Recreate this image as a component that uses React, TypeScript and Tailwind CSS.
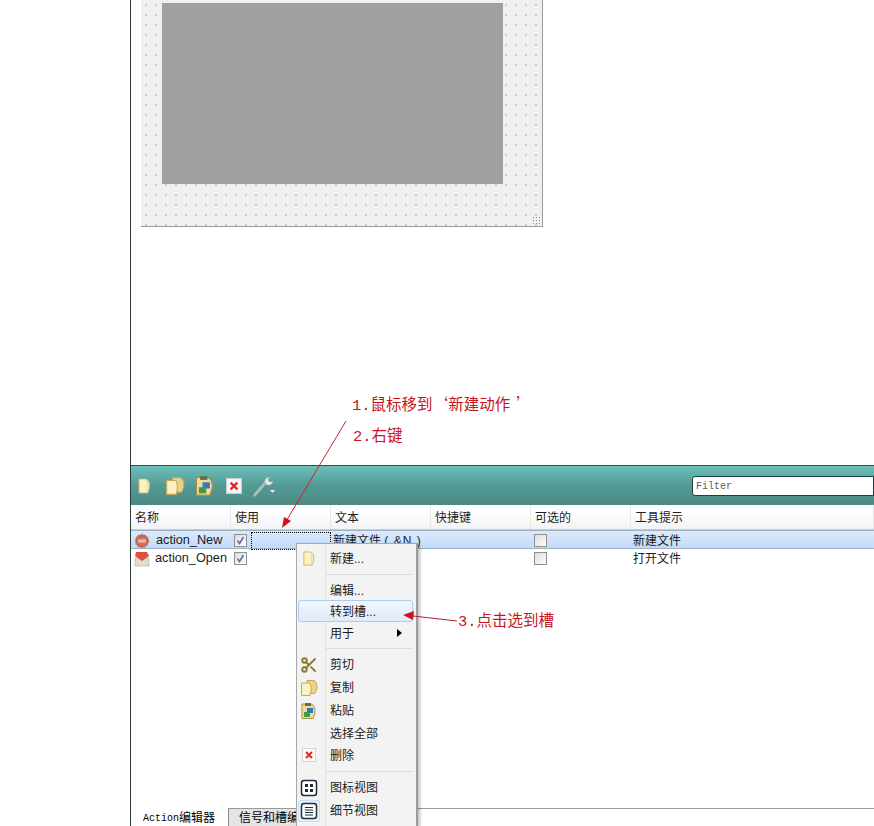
import { Scissors } from 'lucide-react'

function FileIcon({ size = 16 }: { size?: number }) {
  return (
    <svg width={size} height={size} viewBox="0 0 16 16">
      <path d="M2 1h7c2.500 1 3.500 3 3.500 6.500 0 3-.7 5.500-1.700 7.500H2z" fill="#fbf3c4" stroke="#cdb56c" />
      <path d="M9 1c1.500 2 1.700 8 1 14" fill="none" stroke="#e8d793" />
    </svg>
  )
}

function FolderPagesIcon({ size = 18 }: { size?: number }) {
  return (
    <svg width={size} height={size} viewBox="0 0 18 18">
      <path d="M7 1.500h7c2 1 3 3 3 6s-1 5-2 7H7z" fill="#e9d388" stroke="#c7ab5f" />
      <path d="M1.500 4h8c1.500 2 2 5 1.500 8l-1 4.500H1.500z" fill="#fbf1c2" stroke="#c7ab5f" />
    </svg>
  )
}

function PasteIcon({ size = 18 }: { size?: number }) {
  return (
    <svg width={size} height={size} viewBox="0 0 18 18">
      <path d="M2 2h9c3 1 4 4 4 7s-1 5-2 7.500H2z" fill="#f0dc97" stroke="#a78f45" />
      <rect x="5" y="1" width="6" height="3" fill="#6e6a4c" />
      <rect x="7" y="6" width="6" height="5" fill="#2f78c4" />
      <rect x="4" y="10" width="6" height="5" fill="#3f9a4b" />
    </svg>
  )
}

function DeleteIcon({ size = 16 }: { size?: number }) {
  return (
    <svg width={size} height={size} viewBox="0 0 16 16">
      <rect x="1.500" y="1.500" width="13" height="13" fill="#fafafa" stroke="#d5d5d5" />
      <path d="M5 5l6 6M11 5l-6 6" stroke="#e02828" strokeWidth="2" />
    </svg>
  )
}

function WrenchIcon() {
  return (
    <svg width="24" height="24" viewBox="0 0 24 24">
      <path d="M2 22L14 8" stroke="#d7d7d7" strokeWidth="2.500" />
      <path d="M2 22L14 8" stroke="#7c8b8a" strokeWidth="0.800" />
      <path d="M13 9c-1-3 1-6 5-6l-2 3 2 2 3-1c0 3-3 5-6 4z" fill="#e8e8e8" stroke="#8b9493" strokeWidth="0.500" />
      <path d="M18 16h5l-2.500 3z" fill="#e8f2f2" />
    </svg>
  )
}

function BadgeIcon() {
  return (
    <svg width="16" height="16" viewBox="0 0 16 16">
      <circle cx="8" cy="8" r="6.500" fill="#c9604c" stroke="#a88a84" strokeWidth="1.500" strokeDasharray="2 1.200" />
      <circle cx="8" cy="8" r="4.500" fill="#d9705c" />
      <rect x="4" y="6.500" width="8" height="3" fill="#efb9aa" />
    </svg>
  )
}

function MailIcon() {
  return (
    <svg width="16" height="16" viewBox="0 0 16 16">
      <rect x="1" y="7" width="14" height="8" fill="#e3dccb" stroke="#a89f8c" strokeWidth="0.500" />
      <path d="M2 1h11l2 4-7 5-7-5z" fill="#de4f43" />
    </svg>
  )
}

function CheckBox({ checked }: { checked?: boolean }) {
  return (
    <span className="flex h-[13px] w-[13px] items-center justify-center border border-[#8e8f8f] bg-gradient-to-br from-[#dcdcdc] to-white">
      {checked && (
        <svg width="11" height="11" viewBox="0 0 11 11">
          <path d="M2.500 5.500l2 3 4-6.500" fill="none" stroke="#5a6fa7" strokeWidth="1.500" />
        </svg>
      )}
    </span>
  )
}

function IconView() {
  return (
    <svg width="18" height="18" viewBox="0 0 18 18">
      <rect x="1.500" y="1.500" width="15" height="15" rx="2.500" fill="#fff" stroke="#1f2d3a" strokeWidth="1.500" />
      <rect x="5" y="5" width="3" height="3" fill="#1f2d3a" />
      <rect x="10" y="5" width="3" height="3" fill="#1f2d3a" />
      <rect x="5" y="10" width="3" height="3" fill="#1f2d3a" />
      <rect x="10" y="10" width="3" height="3" fill="#1f2d3a" />
    </svg>
  )
}

function DetailView() {
  return (
    <span className="flex h-[22px] w-[22px] items-center justify-center rounded-[2px] border border-[#c9dcf2] bg-[#e8f0fa]">
      <svg width="18" height="18" viewBox="0 0 18 18">
        <rect x="1.500" y="1.500" width="15" height="15" rx="2.500" fill="#fff" stroke="#1f2d3a" strokeWidth="1.500" />
        <path d="M5 5.500h8M5 8h8M5 10.500h8M5 13h8" stroke="#1f2d3a" />
      </svg>
    </span>
  )
}

function MenuRow({
  label,
  icon,
  h = 'h-[23px]',
  active,
  arrow,
}: {
  label: string
  icon?: React.ReactNode
  h?: string
  active?: boolean
  arrow?: boolean
}) {
  return (
    <div
      className={`relative ml-[1px] mr-[3px] flex items-center ${h} ${
        active ? 'rounded-[3px] bg-gradient-to-b from-[#f2f7fd] to-[#dfeafa] outline outline-1 -outline-offset-1 outline-[#aeccee]' : ''
      }`}
    >
      <span className="flex w-[22px] shrink-0 items-center justify-center">{icon}</span>
      <span className="ml-[10px] pt-[1px] text-[12px] text-[#1b1b1b]">{label}</span>
      {arrow && <span className="absolute right-[11px] h-0 w-0 border-y-[4px] border-l-[5px] border-y-transparent border-l-black" />}
    </div>
  )
}

function MenuSep({ h }: { h: string }) {
  return (
    <div className={`flex ${h} items-center pl-[29px] pr-[3px]`}>
      <div className="h-[1px] w-full bg-[#dcdcdc]" />
    </div>
  )
}

const headers = ['名称', '使用', '文本', '快捷键', '可选的', '工具提示']

export default function App() {
  return (
    <div className="relative flex h-[826px] w-[874px] overflow-hidden bg-white font-['Liberation_Sans','Noto_Sans_CJK_SC',sans-serif]">
      <div className="w-[130px] shrink-0" />

      <div className="relative flex min-w-0 flex-1 flex-col border-l border-[#2c3a38]">
        {/* Form canvas */}
        <div className="h-[465px] shrink-0">
          <div className="relative ml-[10px] h-[227px] w-[402px] border-r border-b border-[#9b9b9b] bg-[#f0f0f0] bg-[radial-gradient(circle,#b8b8b8_0.6px,transparent_0.9px)] bg-[length:10px_10px]">
            <div className="absolute top-[3px] left-[21px] h-[181px] w-[341px] bg-[#a0a0a0]" />
            <div className="absolute right-[1px] bottom-[1px] h-[9px] w-[9px] bg-[radial-gradient(circle,#8a8a8a_0.7px,transparent_0.9px)] bg-[length:3px_3px]" />
          </div>
        </div>

        {/* Action editor toolbar */}
        <div className="flex h-[40px] shrink-0 items-center border-t border-[#24544f] bg-gradient-to-b from-[#6cc0ba] via-[#549a94] to-[#4c8a85]">
          <div className="ml-[6px] flex w-[16px] justify-center">
            <FileIcon size={22} />
          </div>
          <div className="ml-[12px]">
            <FolderPagesIcon size={20} />
          </div>
          <div className="ml-[9px]">
            <PasteIcon size={22} />
          </div>
          <div className="ml-[9px]">
            <DeleteIcon size={18} />
          </div>
          <div className="ml-[9px]">
            <WrenchIcon />
          </div>
          <div className="ml-auto flex h-[20px] w-[182px] items-center rounded-l-[3px] border border-[#1e3f3c] bg-white pt-[1px] pl-[3px] font-['Liberation_Mono',monospace] text-[10px] text-[#5c5c5c]">
            Filter
          </div>
        </div>

        {/* Column header */}
        <div className="grid h-[25px] shrink-0 grid-cols-[100px_100px_100px_100px_100px_1fr] border-b border-[#c6ccd2] bg-gradient-to-b from-white from-30% to-[#f2f3f5]">
          {headers.map((h) => (
            <div key={h} className="flex items-center border-r border-[#e6e7e9] pt-[1px] pl-[4px] text-[12px] text-[#1e1e1e]">
              {h}
            </div>
          ))}
        </div>

        {/* Rows */}
        <div className="relative grid h-[19px] shrink-0 grid-cols-[100px_100px_100px_100px_100px_1fr] items-center border-y border-[#9eb0c6] bg-gradient-to-b from-[#dcebfc] to-[#c2dafa] text-[12px] text-[#1b1b1b]">
          <div className="flex items-center pl-[3px]">
            <BadgeIcon />
            <span className="ml-[6px] text-[12.7px]">action_New</span>
          </div>
          <div className="flex items-center pl-[3px]">
            <CheckBox checked />
            <div className="ml-[4px] h-[18px] w-[80px] border border-dotted border-black" />
          </div>
          <div className="whitespace-nowrap pl-[2px]">
            新建文件 <span className="tracking-[1px]">( &amp;N )</span>
          </div>
          <div />
          <div className="pl-[3px]">
            <CheckBox />
          </div>
          <div className="pl-[2px]">新建文件</div>
        </div>
        <div className="grid h-[19px] shrink-0 grid-cols-[100px_100px_100px_100px_100px_1fr] items-center text-[12px] text-[#1b1b1b]">
          <div className="flex items-center pl-[3px]">
            <MailIcon />
            <span className="ml-[5px] text-[12.7px]">action_Open</span>
          </div>
          <div className="pl-[3px]">
            <CheckBox checked />
          </div>
          <div />
          <div />
          <div className="pl-[3px]">
            <CheckBox />
          </div>
          <div className="pl-[2px] pt-[1px]">打开文件</div>
        </div>

        <div className="flex-1" />

        {/* Bottom tabs */}
        <div className="flex h-[18px] shrink-0 items-end">
          <div className="ml-[12px] flex h-[18px] w-[85px] items-center pt-[2px] text-[12px] text-black">
            <span className="font-['Liberation_Mono',monospace] text-[10px]">Action</span>
            <span>编辑器</span>
          </div>
          <div className="flex h-[18px] flex-1 items-center border-t border-[#9a9a9a]">
            <div className="flex h-[17px] w-[90px] items-center whitespace-nowrap border-x border-[#8a8a8a] bg-[#e4e4e4] pl-[10px] text-[12px]">
              信号和槽编辑器
            </div>
          </div>
        </div>

        {/* Context menu */}
        <div className="absolute top-[543px] left-[165px] flex h-[283px] w-[122px] flex-col border-t border-r-2 border-l border-[#a8a8a8] border-r-[#9c9c9c] bg-[#f3f3f3] pt-[3px] shadow-[2px_2px_3px_rgba(0,0,0,0.25)]">
          <div className="absolute top-0 bottom-0 left-[28px] w-[1px] bg-[#e4e4e4]" />
          <MenuRow label="新建..." h="h-[22px]" icon={<FileIcon size={15} />} />
          <MenuSep h="h-[11px]" />
          <MenuRow label="编辑..." h="h-[20px]" />
          <MenuRow label="转到槽..." h="h-[22px]" active />
          <MenuRow label="用于" h="h-[22px]" arrow />
          <MenuSep h="h-[9px]" />
          <MenuRow label="剪切" icon={<Scissors size={18} strokeWidth={2.500} className="text-[#8a7a30]" />} />
          <MenuRow label="复制" icon={<FolderPagesIcon size={18} />} />
          <MenuRow label="粘贴" icon={<PasteIcon size={18} />} />
          <MenuRow label="选择全部" h="h-[22px]" />
          <MenuRow label="删除" h="h-[22px]" icon={<DeleteIcon size={16} />} />
          <MenuSep h="h-[10px]" />
          <MenuRow label="图标视图" icon={<IconView />} />
          <MenuRow label="细节视图" icon={<DetailView />} />
        </div>

        {/* Annotations */}
        <svg className="pointer-events-none absolute top-0 left-0" width="743" height="826">
          <path d="M215 421L154 523" stroke="#d02030" fill="none" />
          <path d="M151 528l2-11 7 4z" fill="#d0101e" />
          <path d="M326 621L282 616" stroke="#b02030" fill="none" />
          <path d="M272 615l11-4-1 9z" fill="#d0101e" />
        </svg>
        <span className="absolute top-[393px] left-[221px] whitespace-nowrap font-['Liberation_Mono','Noto_Sans_CJK_SC',monospace] text-[15.5px] leading-[20px] text-[#c8141e]">
          1.鼠标移到<span className="font-['Noto_Sans_CJK_SC',sans-serif]">‘</span>新建动作<span className="pl-[6px] font-['Noto_Sans_CJK_SC',sans-serif]">’</span>
        </span>
        <span className="absolute top-[427px] left-[222px] whitespace-nowrap font-['Liberation_Mono','Noto_Sans_CJK_SC',monospace] text-[15.5px] leading-[20px] text-[#c8141e]">2.右键</span>
        <span className="absolute top-[612px] left-[327px] whitespace-nowrap font-['Liberation_Mono','Noto_Sans_CJK_SC',monospace] text-[15.5px] leading-[20px] text-[#c8141e]">3.点击选到槽</span>
      </div>
    </div>
  )
}
